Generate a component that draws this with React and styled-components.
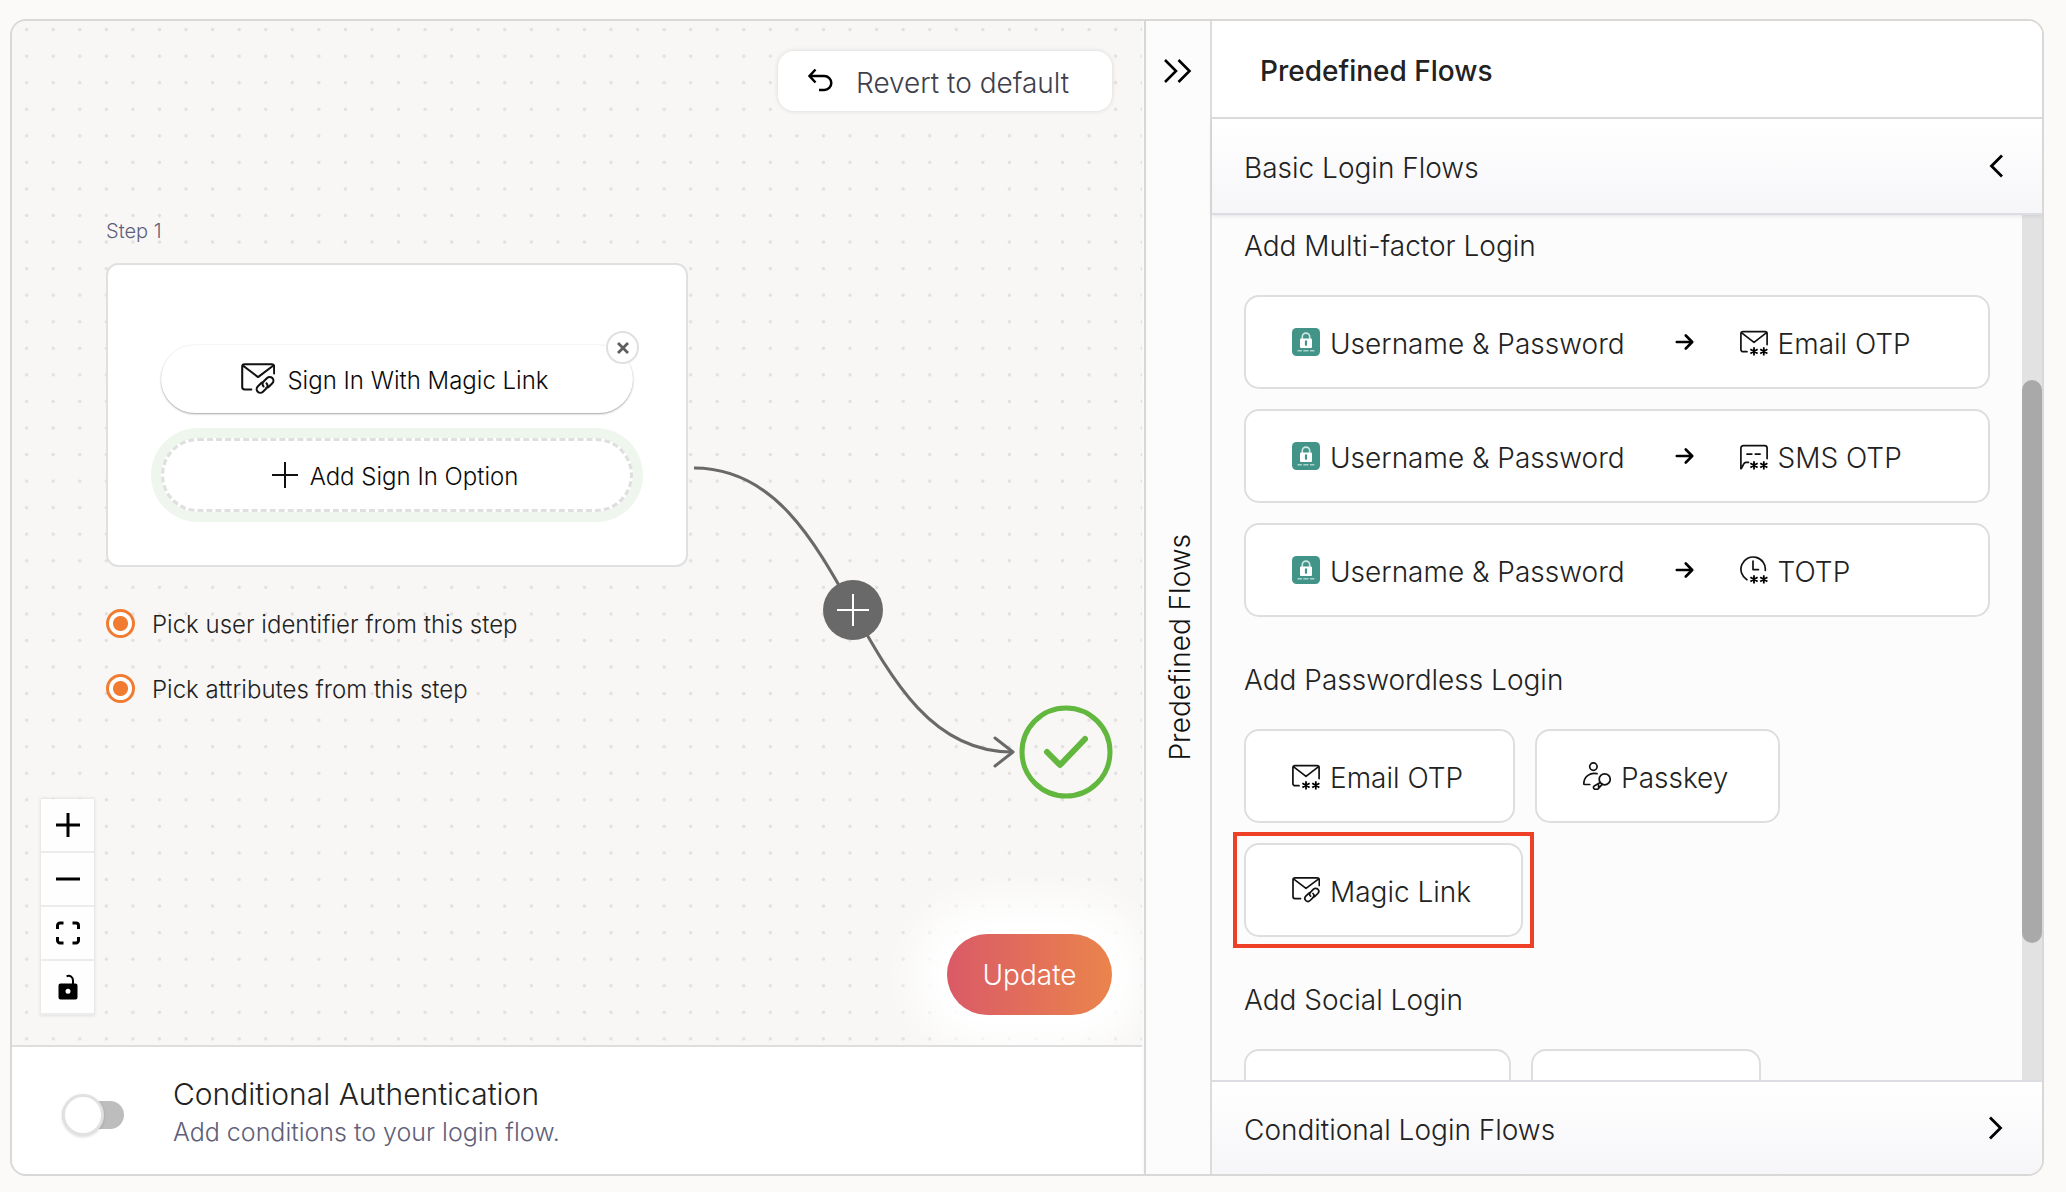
import React from "react";
import styled, { createGlobalStyle, css } from "styled-components";

const line = "#dedede";
const ink = "#222222";

const GlobalStyle = createGlobalStyle`
  *, *::before, *::after { box-sizing: border-box; }
  body {
    margin: 0;
    background: #fbfaf8;
    color: ${ink};
    font-family: Inter, "Open Sans", sans-serif;
    font-size: 28px;
    font-weight: 300;
    line-height: 36px;
  }
  button { font: inherit; color: inherit; cursor: pointer; }
`;

const Page = styled.main`
  height: 100vh;
  min-height: 900px;
  padding: 19px 22px 16px 10px;
`;

const Frame = styled.div`
  height: 100%;
  display: grid;
  grid-template-columns: minmax(0, 1132fr) 68px minmax(0, 830fr);
  border: 2px solid #d9d8d6;
  border-radius: 16px;
  overflow: hidden;
`;

const Caption = styled.span`
  padding-top: 3px;
  white-space: nowrap;
`;

/* ---------- Canvas column ---------- */

const Builder = styled.section`
  display: flex;
  flex-direction: column;
  min-height: 0;
  border-right: 2px solid #fbfafa;
`;

const Canvas = styled.div`
  position: relative;
  flex: 1;
  min-height: 0;
  overflow: hidden;
  background: #f8f7f5;
`;

const Layer = styled.svg`
  position: absolute;
  inset: 0;
  width: 100%;
  height: 100%;
`;

const RevertButton = styled.button`
  position: absolute;
  top: 30px;
  right: 30px;
  display: flex;
  align-items: center;
  gap: 22px;
  height: 60px;
  min-width: 334px;
  padding: 0 28px;
  border: 0;
  border-radius: 16px;
  background: #fff;
  color: #40404b;
  box-shadow: 0 0 5px rgba(0, 0, 0, 0.13);
`;

const UpdateButton = styled.button`
  position: absolute;
  right: 30px;
  bottom: 30px;
  height: 81px;
  min-width: 165px;
  padding: 0 32px;
  border: 0;
  border-radius: 41px;
  color: #fff;
  background: linear-gradient(90deg, #da5a67, #ea844c);
  box-shadow: 0 0 40px 34px #fff;
`;

const StepNode = styled.article`
  position: absolute;
  left: 94px;
  top: 198px;
  width: 582px;
`;

const StepLabel = styled.h3`
  margin: 0 0 20px;
  font-size: 20px;
  line-height: 24px;
  font-weight: inherit;
  color: #5f5f7b;
`;

const StepCard = styled.div`
  display: flex;
  flex-direction: column;
  gap: 25px;
  padding: 80px 53px 53px;
  border: 2px solid #e0e0e0;
  border-radius: 12px;
  background: #fff;
  font-size: 24px;
`;

const OptionWrap = styled.div`
  position: relative;
`;

const optionBase = css`
  width: 100%;
  display: flex;
  align-items: center;
  justify-content: center;
  gap: 12px;
  padding: 0 10px 0 6px;
  background: #fff;
  color: #0a0a0a;
`;

const SignInOption = styled.button`
  ${optionBase}
  height: 68px;
  border: 0;
  border-radius: 34px;
  box-shadow: 0 1px 2px rgba(0, 0, 0, 0.36), 0 -1px 1px rgba(0, 0, 0, 0.02);
`;

const AddOption = styled.button`
  ${optionBase}
  height: 74px;
  border: 3px dashed #dfdfdf;
  border-radius: 37px;
  box-shadow: 0 0 0 10px #eff6ee;
`;

const RemoveButton = styled.button`
  position: absolute;
  top: -14px;
  right: -6px;
  width: 33px;
  height: 33px;
  padding: 0;
  display: grid;
  place-items: center;
  border: 2px solid #e0e0e0;
  border-radius: 50%;
  background: #fff;
`;

const Choices = styled.div`
  display: grid;
  gap: 34px;
  margin-top: 41px;
`;

const Choice = styled.label`
  display: flex;
  align-items: center;
  gap: 17px;
  font-size: 24px;
  line-height: 28px;
`;

const Radio = styled.input`
  appearance: none;
  flex: none;
  width: 29px;
  height: 29px;
  margin: 0;
  border: 3px solid #f07b31;
  border-radius: 50%;
  background: radial-gradient(circle, #f07b31 7px, #fff 8px);
`;

const AddStepButton = styled.button`
  position: absolute;
  left: 811px;
  top: 559px;
  width: 60px;
  height: 60px;
  padding: 0;
  display: grid;
  place-items: center;
  border: 0;
  border-radius: 50%;
  background: #696969;
`;

const DoneNode = styled.div`
  position: absolute;
  left: 1007px;
  top: 684px;
  width: 94px;
  height: 94px;
`;

const Controls = styled.div`
  position: absolute;
  left: 29px;
  bottom: 30px;
  display: flex;
  flex-direction: column;
  box-shadow: 0 0 3px 1px rgba(0, 0, 0, 0.09);
`;

const ControlButton = styled.button`
  width: 53px;
  height: 54px;
  padding: 0;
  display: grid;
  place-items: center;
  border: 0;
  border-bottom: 2px solid #ececec;
  background: #fefefe;
`;

const ConditionBar = styled.div`
  display: flex;
  align-items: center;
  gap: 49px;
  height: 129px;
  padding: 0 50px;
  border-top: 2px solid ${line};
  background: #fff;
`;

const Toggle = styled.input`
  appearance: none;
  flex: none;
  position: relative;
  width: 62px;
  height: 42px;
  margin: 8px 0 0;
  &::before {
    content: "";
    position: absolute;
    inset: 7px 0;
    border-radius: 14px;
    background: #bdbdbd;
  }
  &::after {
    content: "";
    position: absolute;
    left: 0;
    top: 0;
    width: 42px;
    height: 42px;
    border: 3px solid #e1e1e1;
    border-radius: 50%;
    background: #fff;
    box-shadow: 0 1px 3px rgba(0, 0, 0, 0.15);
  }
`;

const ConditionText = styled.label`
  display: flex;
  flex-direction: column;
  padding-top: 4px;
  font-size: 30px;
  line-height: 38px;
`;

const Hint = styled.span`
  font-size: 25px;
  color: #606079;
`;

/* ---------- Collapse rail ---------- */

const Rail = styled.aside`
  display: grid;
  grid-template-rows: 100px 1fr 100px;
  justify-items: center;
  align-items: center;
  border-left: 2px solid #d8d8d6;
  border-right: 2px solid #dcdcdc;
  background: #fcfcfc;
`;

const RailToggle = styled.button`
  padding: 0;
  display: grid;
  border: 0;
  background: none;
`;

const RailText = styled.span`
  grid-row: 2 / 4;
  padding-right: 3px;
  writing-mode: vertical-rl;
  transform: rotate(180deg);
  color: #111;
`;

/* ---------- Predefined flows ---------- */

const Panel = styled.section`
  display: flex;
  flex-direction: column;
  min-height: 0;
  background: #fcfcfc;
`;

const PanelTitle = styled.h2`
  display: flex;
  align-items: center;
  height: 98px;
  margin: 0;
  padding: 0 48px;
  border-bottom: 2px solid ${line};
  background: #fff;
  font-size: 28px;
  font-weight: 500;
`;

const Accordion = styled.button`
  flex: none;
  display: flex;
  align-items: center;
  justify-content: space-between;
  height: ${(p) => (p.$open ? 96 : 94)}px;
  padding: 0 38px 0 32px;
  border: 0 solid #dcdce3;
  border-width: ${(p) => (p.$open ? "0 0 2px" : "2px 0 0")};
  background: linear-gradient(#fff, #f6f6f9);
  box-shadow: ${(p) => (p.$open ? "0 1px 4px rgba(80, 80, 110, 0.14)" : "none")};
  position: relative;
`;

const PanelBody = styled.div`
  flex: 1;
  min-height: 0;
  display: flex;
  overflow: hidden;
`;

const FlowList = styled.div`
  flex: 1;
  min-width: 0;
  padding: 13px 32px 0;
`;

const Group = styled.section`
  margin-bottom: 45px;
`;

const GroupTitle = styled.h3`
  margin: 0 0 31px;
  font-size: 28px;
  font-weight: inherit;
`;

const Cards = styled.div`
  display: flex;
  flex-wrap: wrap;
  gap: 20px;
`;

const FlowCard = styled.button`
  display: flex;
  align-items: center;
  width: ${(p) => p.$width || "auto"};
  height: 94px;
  padding: 0 50px 0 46px;
  border: 2px solid ${line};
  border-radius: 15px;
  background: #fff;
`;

const Factor = styled.span`
  display: flex;
  align-items: center;
  gap: 10px;
`;

const Arrow = styled.svg`
  flex: none;
  margin: 0 46px 0 50px;
`;

const Highlight = styled.div`
  display: flex;
  margin: -11px;
  padding: 7px;
  border: 4px solid #ee4027;
`;

const Track = styled.div`
  flex: none;
  width: 20px;
  display: grid;
  grid-template-rows: 165fr 563fr 137fr;
  background: #e2e2e2;
`;

const Thumb = styled.div`
  grid-row: 2;
  border-radius: 10px;
  background: #a9a9a9;
`;

/* ---------- Icons ---------- */

const Glyph = ({ size = 28, box = 28, stroke = 1.7, children, ...rest }) => (
  <svg width={size} height={size} viewBox={`0 0 ${box} ${box}`} fill="none" stroke="#111"
    strokeWidth={stroke} strokeLinecap="round" strokeLinejoin="round" aria-hidden="true" {...rest}>
    {children}
  </svg>
);

const Stars = () => (
  <path strokeWidth="1.8" stroke="#000" strokeLinecap="butt"
    d="M14 19.2v8.4M10.4 21.3l7.2 4.2M17.6 21.3l-7.2 4.2M23.8 19.2v8.4M20.2 21.3l7.2 4.2M27.4 21.3l-7.2 4.2" />
);

const MailOtpIcon = () => (
  <Glyph><path d="M7 23.7H3.2a2.3 2.3 0 0 1-2.3-2.3V5.6a2 2 0 0 1 2-2h22.2a2 2 0 0 1 2 2v11M1.4 4.6 14 14.4 26.6 4.6" /><Stars /></Glyph>
);

const SmsIcon = () => (
  <Glyph><path d="M27.1 16.6V6.1a2.5 2.5 0 0 0-2.5-2.5H3.4A2.5 2.5 0 0 0 .9 6.1v20.6c1.8-.6 1.9-6.3 5.1-6.3h2.5M7 12.1h4.8M15.3 12.1h4.8" /><Stars /></Glyph>
);

const TotpIcon = () => (
  <Glyph><path d="M25.3 14.5A12.2 12.2 0 1 0 6.9 23.7M13 5v8.6h5.5" /><Stars /></Glyph>
);

const MagicIcon = ({ size }) => (
  <Glyph size={size}>
    <path d="M8.5 22.6H3a2 2 0 0 1-2-2V3.9a2 2 0 0 1 2-2h22.3a2 2 0 0 1 2 2v5.5M1.5 2.9 14 12.4 26.7 2.9" />
    <path d="M18.6 20.2a2.9 2.9 0 0 1 0-4.1l2.9-2.9a3 3 0 0 1 4.3 4.3l-2.9 2.9a2.9 2.9 0 0 1-2.1.9M21 17.5a2.9 2.9 0 0 1 0 4.1l-2.9 2.9a3 3 0 0 1-4.3-4.3l2.9-2.9a2.9 2.9 0 0 1 1.6-.8" />
  </Glyph>
);

const PasskeyIcon = () => (
  <Glyph>
    <circle cx="10.4" cy="4.6" r="3.7" />
    <path d="M14 11.7C7.5 10.2.8 14.2.8 21.7c0 .6.2.8.8.8h5.2" />
    <circle cx="21.7" cy="17.3" r="5.5" />
    <path d="m17.3 20.6-6.1 3.3a1.9 1.9 0 0 0 1.2 3.4h2.2l4.6-4.9M15.6 22.7v2.5" />
  </Glyph>
);

const PasswordIcon = () => (
  <svg width="28" height="28" viewBox="0 0 28 28" fill="none" aria-hidden="true">
    <rect width="28" height="28" rx="4.5" fill="#429488" />
    <path d="M10.3 11V8.8a3.7 3.7 0 0 1 7.4 0V11" stroke="#cfe5e2" strokeWidth="1.6" />
    <rect x="8" y="10.4" width="12" height="9.6" rx="1" fill="#fff" />
    <path d="M14 13.4v3.4" stroke="#429488" strokeWidth="2.2" strokeLinecap="round" />
    <path d="M5.5 22.7h4.4M11.3 22.7h5.2M18 22.7h4.4" stroke="#a9d2cc" strokeWidth="1.4" />
  </svg>
);

const ArrowIcon = () => (
  <Arrow width="19" height="18" viewBox="0 0 19 18" fill="none" stroke="#000" strokeWidth="2.6"
    strokeLinecap="round" strokeLinejoin="round" aria-hidden="true">
    <path d="M1.8 9h15M10.8 2.5 17.2 9l-6.4 6.5" />
  </Arrow>
);

const Chevron = ({ d }) => (
  <svg width="16" height="24" viewBox="0 0 16 24" fill="none" stroke="#000" strokeWidth="2.8" aria-hidden="true">
    <path d={d} />
  </svg>
);

/* ---------- Data ---------- */

const secondFactors = [
  { name: "Email OTP", Icon: MailOtpIcon },
  { name: "SMS OTP", Icon: SmsIcon },
  { name: "TOTP", Icon: TotpIcon },
];

const zoomControls = [
  { name: "Zoom in", art: <path d="M16 4v24M4 16h24" stroke="#000" strokeWidth="3" /> },
  { name: "Zoom out", art: <path d="M4 16h24" stroke="#000" strokeWidth="3" /> },
  {
    name: "Fit view",
    art: <path d="M5.5 12V8.5A2.5 2.5 0 0 1 8 6h3.5M20.5 6H24a2.5 2.5 0 0 1 2.5 2.5V12M26.5 20v3.5A2.5 2.5 0 0 1 24 26h-3.5M11.5 26H8a2.5 2.5 0 0 1-2.5-2.5V20" fill="none" stroke="#000" strokeWidth="3" />,
  },
  {
    name: "Lock canvas",
    art: (
      <>
        <path d="M14.6 5.2c4-1.3 6.4 1.2 6.4 4.4V14" fill="none" stroke="#000" strokeWidth="2" />
        <path fillRule="evenodd" d="M8.5 12.5h15a2 2 0 0 1 2 2v12a2 2 0 0 1-2 2h-15a2 2 0 0 1-2-2v-12a2 2 0 0 1 2-2ZM16 17.8a2.5 2.5 0 1 0 0 5 2.5 2.5 0 0 0 0-5Z" />
      </>
    ),
  },
];

export default function App() {
  return (
    <>
      <GlobalStyle />
      <Page>
        <Frame>
          <Builder>
            <Canvas>
              <Layer aria-hidden="true">
                <defs>
                  <pattern id="grid-dots" x="1.4" y="-4.7" width="26.56" height="26.56" patternUnits="userSpaceOnUse">
                    <circle cx="13.28" cy="13.28" r="1.7" fill="#e1e0de" />
                  </pattern>
                </defs>
                <rect width="100%" height="100%" fill="url(#grid-dots)" />
                <g fill="none" stroke="#696969" strokeWidth="3">
                  <path d="M682 447C841 447 841 731 1000 731" />
                  <path d="M983 717l18 14-18 14" strokeLinecap="round" strokeLinejoin="round" />
                </g>
              </Layer>

              <StepNode>
                <StepLabel>Step 1</StepLabel>
                <StepCard>
                  <OptionWrap>
                    <SignInOption type="button">
                      <MagicIcon size={34} />
                      <Caption>Sign In With Magic Link</Caption>
                    </SignInOption>
                    <RemoveButton type="button" aria-label="Remove Magic Link">
                      <svg width="14" height="14" viewBox="0 0 14 14" stroke="#5e5e5e" strokeWidth="2.8" aria-hidden="true">
                        <path d="m2 2 10 10M12 2 2 12" />
                      </svg>
                    </RemoveButton>
                  </OptionWrap>
                  <AddOption type="button">
                    <svg width="26" height="26" viewBox="0 0 26 26" stroke="#111" strokeWidth="2" aria-hidden="true">
                      <path d="M13 0v26M0 13h26" />
                    </svg>
                    <Caption>Add Sign In Option</Caption>
                  </AddOption>
                </StepCard>
                <Choices>
                  <Choice><Radio type="radio" name="identifier" defaultChecked /><Caption>Pick user identifier from this step</Caption></Choice>
                  <Choice><Radio type="radio" name="attributes" defaultChecked /><Caption>Pick attributes from this step</Caption></Choice>
                </Choices>
              </StepNode>

              <AddStepButton type="button" aria-label="Add step">
                <svg width="32" height="32" viewBox="0 0 32 32" stroke="#fff" strokeWidth="2" aria-hidden="true">
                  <path d="M16 0v32M0 16h32" />
                </svg>
              </AddStepButton>

              <DoneNode>
                <svg width="94" height="94" viewBox="0 0 94 94" fill="none" stroke="#62b73f" role="img" aria-label="Done">
                  <circle cx="47" cy="47" r="44" strokeWidth="5" />
                  <path d="m28 47 13 13 25-26" strokeWidth="6" strokeLinecap="round" strokeLinejoin="round" />
                </svg>
              </DoneNode>

              <RevertButton type="button">
                <svg width="28" height="26" viewBox="0 0 28 26" fill="none" stroke="#000" strokeWidth="2.5" aria-hidden="true">
                  <path d="M9.5 1.5 3.5 8l6 6.5M3.5 8h14.8a7 7 0 0 1 0 14H13" />
                </svg>
                <Caption>Revert to default</Caption>
              </RevertButton>

              <Controls>
                {zoomControls.map(({ name, art }) => (
                  <ControlButton key={name} type="button" aria-label={name}>
                    <svg width="32" height="32" viewBox="0 0 32 32" aria-hidden="true">{art}</svg>
                  </ControlButton>
                ))}
              </Controls>

              <UpdateButton type="button">Update</UpdateButton>
            </Canvas>

            <ConditionBar>
              <Toggle type="checkbox" role="switch" id="conditional-auth" />
              <ConditionText htmlFor="conditional-auth">
                Conditional Authentication
                <Hint>Add conditions to your login flow.</Hint>
              </ConditionText>
            </ConditionBar>
          </Builder>

          <Rail>
            <RailToggle type="button" aria-label="Collapse panel">
              <svg width="30" height="26" viewBox="0 0 30 26" fill="none" stroke="#000" strokeWidth="2.6" aria-hidden="true">
                <path d="m2 2 11 11L2 24M15.5 2l11 11-11 11" />
              </svg>
            </RailToggle>
            <RailText>Predefined Flows</RailText>
          </Rail>

          <Panel>
            <PanelTitle><Caption>Predefined Flows</Caption></PanelTitle>
            <Accordion type="button" aria-expanded="true" $open>
              <Caption>Basic Login Flows</Caption>
              <Chevron d="M14 1.5 3.5 12 14 22.5" />
            </Accordion>
            <PanelBody>
              <FlowList>
                <Group>
                  <GroupTitle>Add Multi-factor Login</GroupTitle>
                  <Cards>
                    {secondFactors.map(({ name, Icon }) => (
                      <FlowCard key={name} type="button" $width="100%">
                        <Factor><PasswordIcon /><Caption>Username &amp; Password</Caption></Factor>
                        <ArrowIcon />
                        <Factor><Icon /><Caption>{name}</Caption></Factor>
                      </FlowCard>
                    ))}
                  </Cards>
                </Group>
                <Group>
                  <GroupTitle>Add Passwordless Login</GroupTitle>
                  <Cards>
                    <FlowCard type="button"><Factor><MailOtpIcon /><Caption>Email OTP</Caption></Factor></FlowCard>
                    <FlowCard type="button"><Factor><PasskeyIcon /><Caption>Passkey</Caption></Factor></FlowCard>
                    <Highlight>
                      <FlowCard type="button"><Factor><MagicIcon size={28} /><Caption>Magic Link</Caption></Factor></FlowCard>
                    </Highlight>
                  </Cards>
                </Group>
                <Group>
                  <GroupTitle>Add Social Login</GroupTitle>
                  <Cards>
                    <FlowCard type="button" $width="267px" />
                    <FlowCard type="button" $width="230px" />
                  </Cards>
                </Group>
              </FlowList>
              <Track><Thumb /></Track>
            </PanelBody>
            <Accordion type="button" aria-expanded="false">
              <Caption>Conditional Login Flows</Caption>
              <Chevron d="M2 1.5 12.5 12 2 22.5" />
            </Accordion>
          </Panel>
        </Frame>
      </Page>
    </>
  );
}
